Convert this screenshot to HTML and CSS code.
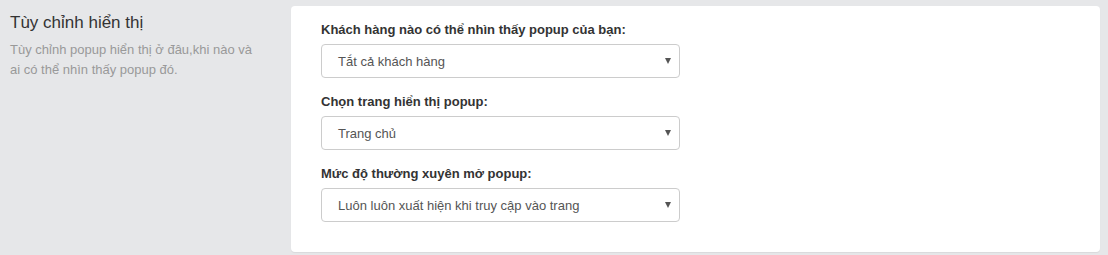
FILE: index.html
```html
<!DOCTYPE html>
<html lang="vi">
<head>
<meta charset="utf-8">
<link rel="stylesheet" href="styles.css">
</head>
<body>
<div class="section">
  <div class="info">
    <h3 class="info-title">Tùy chỉnh hiển thị</h3>
    <p class="info-desc">Tùy chỉnh popup hiển thị ở đâu,khi nào và ai có thể nhìn thấy popup đó.</p>
  </div>
  <div class="card">
    <div class="form-group">
      <label class="label">Khách hàng nào có thể nhìn thấy popup của bạn:</label>
      <div class="select"><span>Tắt cả khách hàng</span><i class="caret"></i></div>
    </div>
    <div class="form-group">
      <label class="label">Chọn trang hiển thị popup:</label>
      <div class="select"><span>Trang chủ</span><i class="caret"></i></div>
    </div>
    <div class="form-group">
      <label class="label">Mức độ thường xuyên mở popup:</label>
      <div class="select"><span>Luôn luôn xuất hiện khi truy cập vào trang</span><i class="caret"></i></div>
    </div>
  </div>
</div>
</body>
</html>
```

FILE: styles.css
```css
html, body {
  margin: 0;
  padding: 0;
  background: #e6e7e9;
  font-family: "Liberation Sans", Arial, sans-serif;
}
.section {
  display: flex;
  padding: 6px 8px 4px 10px;
}
.info {
  width: 281px;
  flex: none;
}
.info-title {
  margin: 6px 0 0;
  font-size: 17px;
  line-height: 21px;
  font-weight: normal;
  color: #333;
}
.info-desc {
  margin: 7px 0 0;
  width: 250px;
  font-size: 13px;
  line-height: 20px;
  color: #999;
}
.card {
  flex: 1;
  background: #fff;
  border-radius: 4px;
  padding: 15px 30px 15px 30px;
  box-shadow: 0 1px 1px rgba(0,0,0,0.06);
}
.form-group {
  margin-bottom: 15px;
}
.label {
  display: block;
  font-size: 13px;
  line-height: 18px;
  font-weight: bold;
  color: #333;
  margin-bottom: 5px;
}
.select {
  width: 359px;
  height: 34px;
  box-sizing: border-box;
  border: 1px solid #ccc;
  border-radius: 4px;
  display: flex;
  align-items: center;
  justify-content: space-between;
  padding: 0 8px 0 16px;
  font-size: 13px;
  color: #555;
}
.caret {
  width: 0;
  height: 0;
  border-left: 3px solid transparent;
  border-right: 3px solid transparent;
  border-top: 6px solid #555;
}
```
